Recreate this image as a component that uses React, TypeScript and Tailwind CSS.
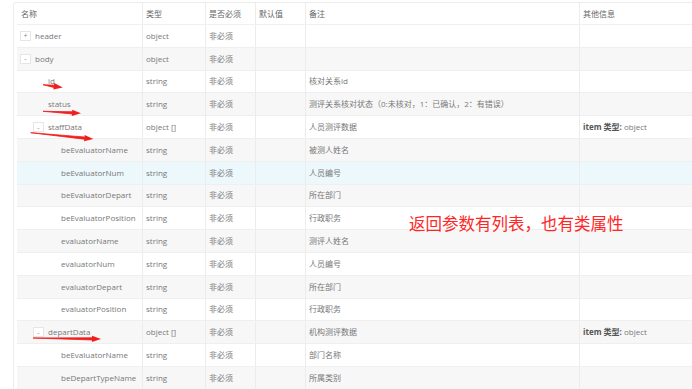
import React from "react";

type Row = {
  name: string;
  type: string;
  remark: string;
  level: number;
  toggle?: "+" | "-";
  other?: boolean;
};

const rows: Row[] = [
  { name: "header", type: "object", remark: "", level: 0, toggle: "+" },
  { name: "body", type: "object", remark: "", level: 0, toggle: "-" },
  { name: "id", type: "string", remark: "核对关系id", level: 1 },
  { name: "status", type: "string", remark: "测评关系核对状态（0:未核对，1：已确认，2：有错误）", level: 1 },
  { name: "staffData", type: "object []", remark: "人员测评数据", level: 1, toggle: "-", other: true },
  { name: "beEvaluatorName", type: "string", remark: "被测人姓名", level: 2 },
  { name: "beEvaluatorNum", type: "string", remark: "人员编号", level: 2 },
  { name: "beEvaluatorDepart", type: "string", remark: "所在部门", level: 2 },
  { name: "beEvaluatorPosition", type: "string", remark: "行政职务", level: 2 },
  { name: "evaluatorName", type: "string", remark: "测评人姓名", level: 2 },
  { name: "evaluatorNum", type: "string", remark: "人员编号", level: 2 },
  { name: "evaluatorDepart", type: "string", remark: "所在部门", level: 2 },
  { name: "evaluatorPosition", type: "string", remark: "行政职务", level: 2 },
  { name: "departData", type: "object []", remark: "机构测评数据", level: 1, toggle: "-", other: true },
  { name: "beEvaluatorName", type: "string", remark: "部门名称", level: 2 },
  { name: "beDepartTypeName", type: "string", remark: "所属类别", level: 2 },
];

const gridCols = "grid grid-cols-[126px_63px_50px_50px_274px_130px]";
const cell = "flex items-center pl-[3px] border-r border-[#ececec] overflow-hidden whitespace-nowrap";

function Arrow({ x1, y1, x2, y2 }: { x1: number; y1: number; x2: number; y2: number }) {
  const dx = x2 - x1;
  const dy = y2 - y1;
  const len = Math.sqrt(dx * dx + dy * dy);
  const ux = dx / len;
  const uy = dy / len;
  const px = -uy;
  const py = ux;
  const hl = 9;
  const hw = 3.2;
  const bx = x2 - ux * hl;
  const by = y2 - uy * hl;
  const body = `M ${x1} ${y1} L ${bx + px * 1.1} ${by + py * 1.1} L ${bx - px * 1.1} ${by - py * 1.1} Z`;
  const head = `M ${x2} ${y2} L ${bx + px * hw} ${by + py * hw} L ${bx - px * hw} ${by - py * hw} Z`;
  return (
    <g fill="#f21d1d">
      <path d={body} stroke="#f21d1d" strokeWidth="0.8" strokeLinejoin="round" />
      <path d={head} />
    </g>
  );
}

export default function App() {
  return (
    <div
      className="relative w-[692px] h-[389px] overflow-hidden bg-white text-[8px] text-[#777]"
      style={{ fontFamily: "'Open Sans', 'Noto Sans CJK SC', sans-serif" }}
    >
      <div className="ml-[13px] mt-[2px] border-l border-t border-[#ededed] rounded-tl-[3px] pl-[3px] w-[720px]">
        <div className={`${gridCols} h-[22px] border-b border-[#f0f0f0] bg-white text-[#666]`}>
          <div className={`${cell} pl-[4px]`}>名称</div>
          <div className={cell}>类型</div>
          <div className={cell}>是否必须</div>
          <div className={cell}>默认值</div>
          <div className={cell}>备注</div>
          <div className={cell}>其他信息</div>
        </div>
        {rows.map((r, i) => {
          const bg = i === 6 ? "bg-[#edf8fd]" : i % 2 === 1 ? "bg-[#f7f7f7]" : "bg-white";
          return (
            <div key={i} className={`${gridCols} h-[22.8px] border-b border-[#efefef] ${bg}`}>
              <div className={`${cell} pl-[3px]`}>
                <div style={{ width: r.level === 0 ? 0 : r.level === 1 ? 13 : 26 }} className="shrink-0" />
                {r.toggle ? (
                  <div className="shrink-0 w-[11px] h-[10px] border border-[#e6e6e6] bg-white flex items-center justify-center text-[7px] leading-none text-[#888]">
                    {r.toggle}
                  </div>
                ) : (
                  <div className="shrink-0 w-[11px]" />
                )}
                <span className="ml-[4px]">{r.name}</span>
              </div>
              <div className={cell}>{r.type}</div>
              <div className={cell}>非必须</div>
              <div className={cell}></div>
              <div className={cell}>{r.remark}</div>
              <div className={cell}>
                {r.other && (
                  <span>
                    <span className="font-bold text-[#555]">item 类型:</span> object
                  </span>
                )}
              </div>
            </div>
          );
        })}
      </div>

      <div
        className="absolute left-[409px] top-[215px] text-[16.5px] leading-none text-[#ff2626] whitespace-nowrap"
        style={{ fontFamily: "'Noto Sans CJK SC', sans-serif" }}
      >
        返回参数有列表，也有类属性
      </div>

      <svg className="absolute left-0 top-0 pointer-events-none" width="692" height="389" viewBox="0 0 692 389">
        <Arrow x1={43} y1={84.7} x2={62.7} y2={87.6} />
        <Arrow x1={43} y1={111.3} x2={81} y2={113.3} />
        <Arrow x1={30.7} y1={132.7} x2={93.3} y2={139} />
        <Arrow x1={33} y1={338} x2={101} y2={339} />
      </svg>
    </div>
  );
}
